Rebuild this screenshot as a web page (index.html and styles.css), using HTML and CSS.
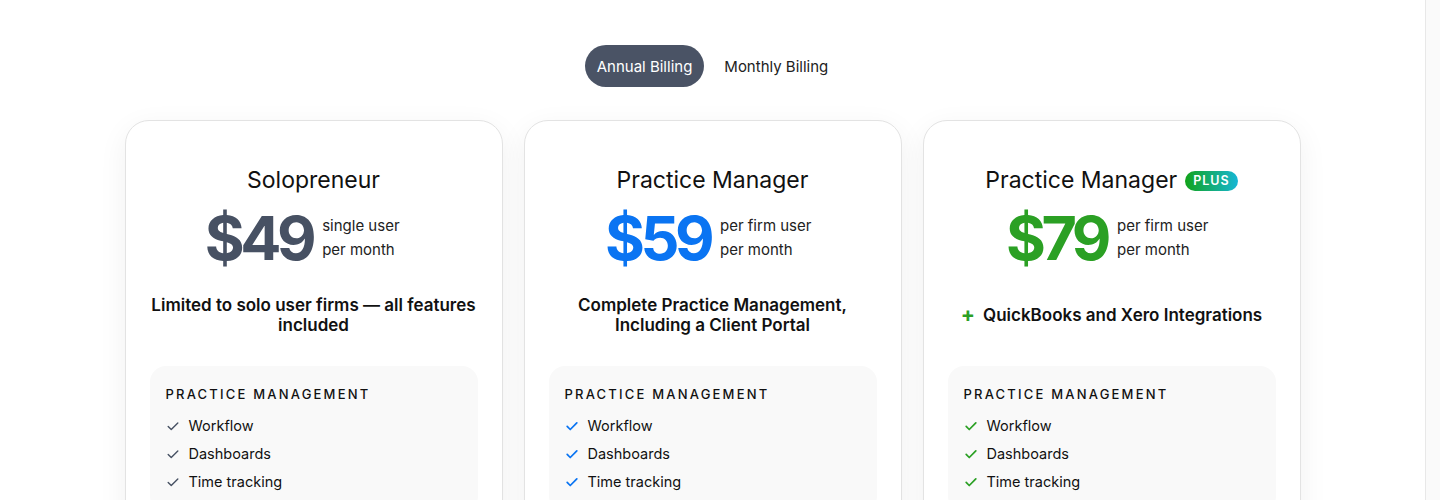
FILE: index.html
```html
<!DOCTYPE html>
<html lang="en">
<head>
  <meta charset="UTF-8">
  <title>Pricing</title>
  <link rel="stylesheet" href="styles.css">
</head>
<body>

<div class="page">
  <div class="billing-toggle">
    <button class="toggle-btn active">Annual Billing</button>
    <button class="toggle-btn">Monthly Billing</button>
  </div>

  <div class="plans">
    <!-- Solopreneur -->
    <div class="plan">
      <h2 class="plan-name">Solopreneur</h2>
      <div class="price-row">
        <span class="price price-slate">$49</span>
        <span class="price-note">single user<br>per month</span>
      </div>
      <p class="plan-desc">Limited to solo user firms — all features included</p>
      <div class="features">
        <h4 class="features-title">Practice Management</h4>
        <ul class="feature-list check-slate">
          <li><svg viewBox="0 0 16 16"><path d="M2.5 8.5l3.5 3.5 7.5-7.5"/></svg>Workflow</li>
          <li><svg viewBox="0 0 16 16"><path d="M2.5 8.5l3.5 3.5 7.5-7.5"/></svg>Dashboards</li>
          <li><svg viewBox="0 0 16 16"><path d="M2.5 8.5l3.5 3.5 7.5-7.5"/></svg>Time tracking</li>
        </ul>
      </div>
    </div>

    <!-- Practice Manager -->
    <div class="plan">
      <h2 class="plan-name">Practice Manager</h2>
      <div class="price-row">
        <span class="price price-blue">$59</span>
        <span class="price-note">per firm user<br>per month</span>
      </div>
      <p class="plan-desc">Complete Practice Management, Including a Client Portal</p>
      <div class="features">
        <h4 class="features-title">Practice Management</h4>
        <ul class="feature-list check-blue">
          <li><svg viewBox="0 0 16 16"><path d="M2.5 8.5l3.5 3.5 7.5-7.5"/></svg>Workflow</li>
          <li><svg viewBox="0 0 16 16"><path d="M2.5 8.5l3.5 3.5 7.5-7.5"/></svg>Dashboards</li>
          <li><svg viewBox="0 0 16 16"><path d="M2.5 8.5l3.5 3.5 7.5-7.5"/></svg>Time tracking</li>
        </ul>
      </div>
    </div>

    <!-- Practice Manager Plus -->
    <div class="plan">
      <h2 class="plan-name">Practice Manager <span class="badge">PLUS</span></h2>
      <div class="price-row">
        <span class="price price-green">$79</span>
        <span class="price-note">per firm user<br>per month</span>
      </div>
      <p class="plan-desc"><span class="plus-sign">+</span> QuickBooks and Xero Integrations</p>
      <div class="features">
        <h4 class="features-title">Practice Management</h4>
        <ul class="feature-list check-green">
          <li><svg viewBox="0 0 16 16"><path d="M2.5 8.5l3.5 3.5 7.5-7.5"/></svg>Workflow</li>
          <li><svg viewBox="0 0 16 16"><path d="M2.5 8.5l3.5 3.5 7.5-7.5"/></svg>Dashboards</li>
          <li><svg viewBox="0 0 16 16"><path d="M2.5 8.5l3.5 3.5 7.5-7.5"/></svg>Time tracking</li>
        </ul>
      </div>
    </div>
  </div>
</div>

<div class="scroll-track"></div>

</body>
</html>
```

FILE: styles.css
```css
body {
  margin: 0;
  display: flex;
  font-family: Inter, "Noto Sans", sans-serif;
  background-color: #ffffff;
  color: #111111;
  height: 500px;
  overflow: hidden;
}
.page {
  flex: 1;
  padding-top: 45px;
}
.scroll-track {
  width: 14px;
  flex-shrink: 0;
  background-color: #fafafa;
  border-left: 1px solid #e8e8e8;
}
.billing-toggle {
  display: flex;
  justify-content: center;
}
.toggle-btn {
  height: 42px;
  padding: 0 12px;
  border: none;
  border-radius: 21px;
  background: transparent;
  font-family: inherit;
  font-size: 15px;
  color: #222;
  cursor: pointer;
  margin: 0 4px;
}
.toggle-btn.active {
  background-color: #4a5365;
  color: #ffffff;
}
.plans {
  display: flex;
  justify-content: center;
  gap: 21px;
  margin-top: 33px;
}
.plan {
  width: 378px;
  box-sizing: border-box;
  border: 1px solid #e3e3e3;
  border-radius: 24px;
  padding: 44px 24px 24px;
  box-shadow: 0 8px 30px rgba(0, 0, 0, 0.06);
  background: #fff;
  height: 420px;
}
.plan-name {
  margin: 0;
  font-size: 23px;
  font-weight: 400;
  line-height: 30px;
  display: flex;
  justify-content: center;
  align-items: center;
  gap: 8px;
}
.badge {
  display: inline-block;
  font-size: 12.5px;
  font-weight: 600;
  letter-spacing: 1px;
  color: #fff;
  padding: 2px 8px;
  border-radius: 12px;
  line-height: 16px;
  background: linear-gradient(90deg, #12a31a, #16b6d6);
  margin-top: 2px;
}
.price-row {
  display: flex;
  justify-content: center;
  align-items: center;
  gap: 12px;
  margin-top: 8px;
  height: 70px;
}
.price {
  font-size: 61px;
  font-weight: 700;
  letter-spacing: -4.5px;
  line-height: 70px;
  margin-right: -2px;
}
.price-slate { color: #475163; }
.price-blue { color: #0a74f2; }
.price-green { color: #2ba024; }
.price-note {
  min-width: 100px;
  font-size: 15px;
  line-height: 24px;
  color: #222;
}
.plan-desc {
  margin: 22px 0 0;
  height: 40px;
  display: flex;
  align-items: center;
  justify-content: center;
  text-align: center;
  font-size: 17px;
  font-weight: 600;
  line-height: 20px;
}
.plus-sign {
  color: #2ba024;
  font-size: 21px;
  font-weight: 700;
  margin-right: 8px;
}
.features {
  margin-top: 31px;
  background-color: #f9f9f9;
  border-radius: 16px;
  padding: 20px 16px 16px;
}
.features-title {
  margin: 0 0 10px;
  font-size: 13px;
  font-weight: 500;
  letter-spacing: 2.2px;
  text-transform: uppercase;
}
.feature-list {
  list-style: none;
  margin: 0;
  padding: 0;
}
.feature-list li {
  display: flex;
  align-items: center;
  gap: 9px;
  font-size: 14.5px;
  line-height: 28px;
}
.feature-list svg {
  width: 14px;
  height: 14px;
  fill: none;
  stroke-width: 1.6;
  stroke-linecap: round;
  stroke-linejoin: round;
}
.check-slate svg { stroke: #475163; }
.check-blue svg { stroke: #0a74f2; stroke-width: 2; }
.check-green svg { stroke: #2ba024; stroke-width: 2; }
```
